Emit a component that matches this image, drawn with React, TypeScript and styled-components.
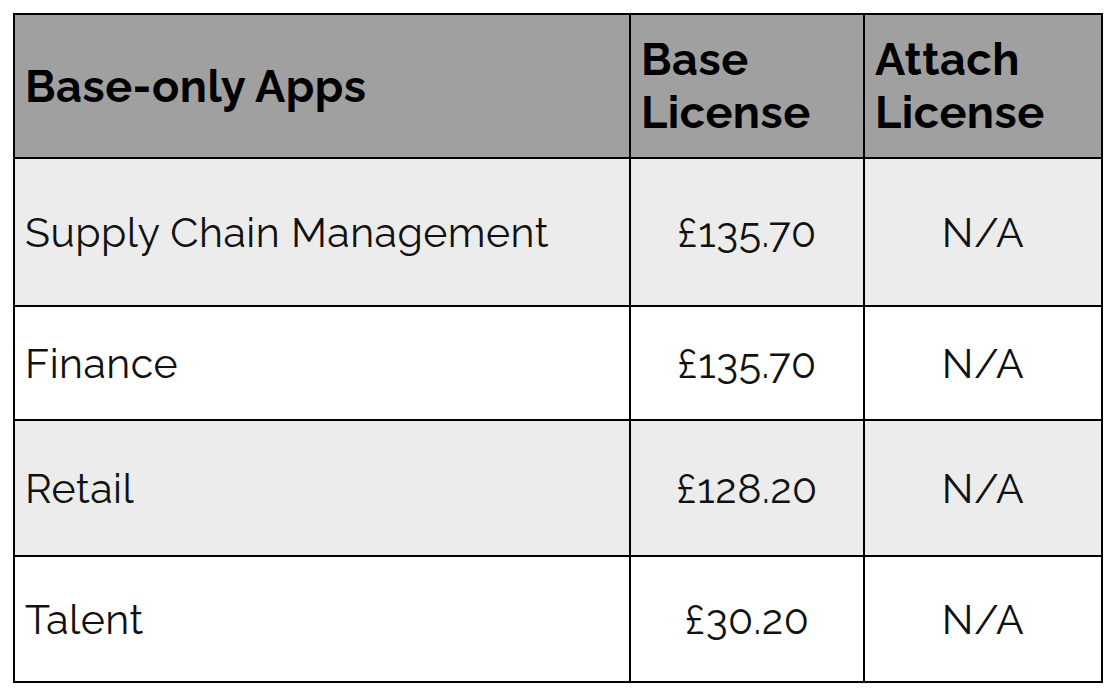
import React from "react";
import styled, { createGlobalStyle } from "styled-components";

const Global = createGlobalStyle`
  html, body { margin: 0; padding: 0; background: #ffffff; }
  body { font-family: "Raleway", Lato, "Noto Sans", sans-serif; }
`;

const Page = styled.div`
  padding: 13px;
`;

const Table = styled.div`
  display: grid;
  grid-template-columns: 614px 232px 236px;
  grid-template-rows: 142px 146px 112px 134px 124px;
  gap: 2px;
  width: 1090px;
  box-sizing: border-box;
  background: #000;
  border: 2px solid #000;
`;

const Cell = styled.div<{ $tone: "head" | "shade" | "plain"; $align?: "left" | "center" }>`
  display: flex;
  align-items: center;
  justify-content: ${(p) => (p.$align === "center" ? "center" : "flex-start")};
  padding: 0 10px;
  background: ${(p) => (p.$tone === "head" ? "#a0a0a0" : p.$tone === "shade" ? "#ececec" : "#ffffff")};
  color: ${(p) => (p.$tone === "head" ? "#000" : "#111")};
  font-size: ${(p) => (p.$tone === "head" ? "45px" : "41px")};
  line-height: 53px;
  font-weight: ${(p) => (p.$tone === "head" ? 700 : 400)};
  letter-spacing: 0.5px;
  white-space: pre-line;
`;

const rows = [
  { app: "Supply Chain Management", base: "£135.70", attach: "N/A" },
  { app: "Finance", base: "£135.70", attach: "N/A" },
  { app: "Retail", base: "£128.20", attach: "N/A" },
  { app: "Talent", base: "£30.20", attach: "N/A" },
];

export default function App() {
  return (
    <Page>
      <Global />
      <Table>
        <Cell $tone="head">Base-only Apps</Cell>
        <Cell $tone="head">{"Base\nLicense"}</Cell>
        <Cell $tone="head">{"Attach\nLicense"}</Cell>
        {rows.map((r, i) => {
          const tone = i % 2 === 0 ? "shade" : "plain";
          return (
            <React.Fragment key={r.app}>
              <Cell $tone={tone}>{r.app}</Cell>
              <Cell $tone={tone} $align="center">{r.base}</Cell>
              <Cell $tone={tone} $align="center">{r.attach}</Cell>
            </React.Fragment>
          );
        })}
      </Table>
    </Page>
  );
}
